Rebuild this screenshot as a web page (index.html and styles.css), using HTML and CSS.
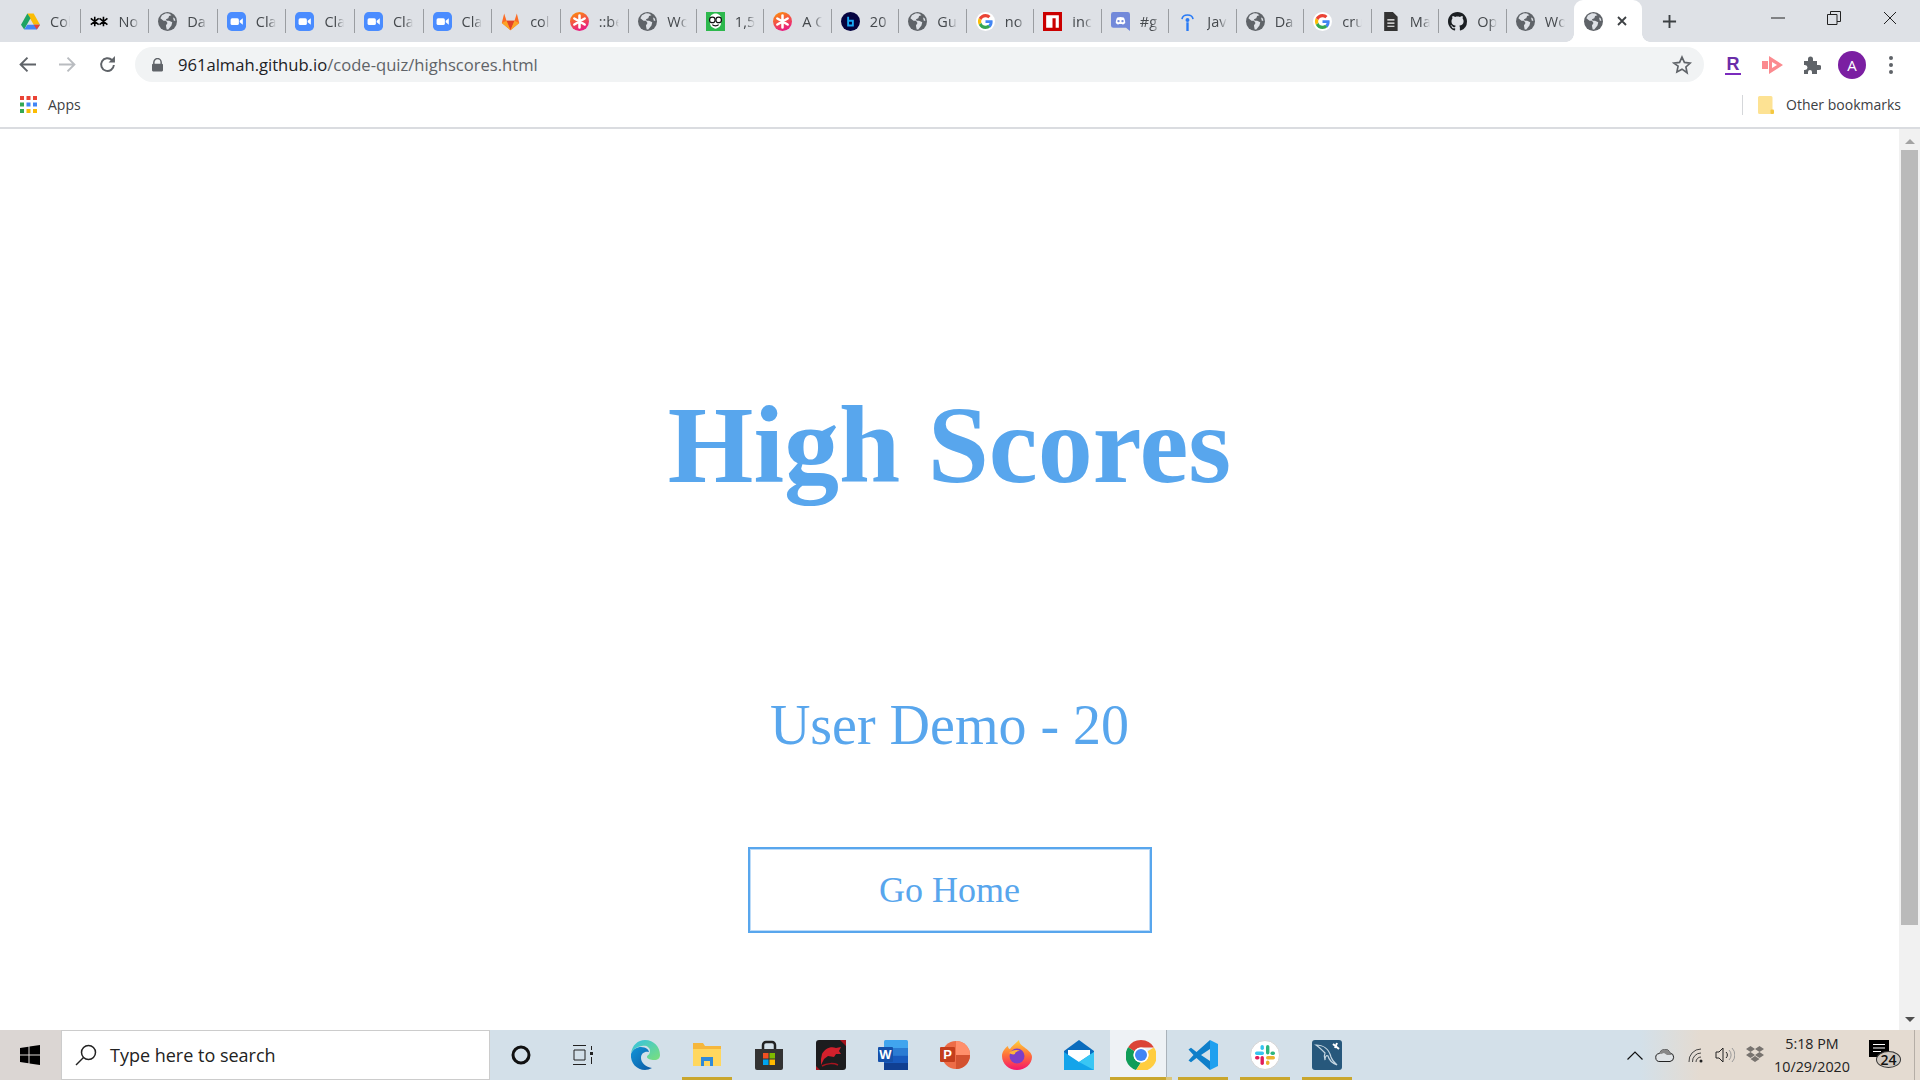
FILE: index.html
```html
<!DOCTYPE html>
<html lang="en">
<head>
  <meta charset="UTF-8">
  <title>High Scores</title>
  <link rel="stylesheet" href="styles.css">
</head>
<body>
  <!-- shared favicons -->
  <svg class="defs" width="0" height="0">
    <defs>
      <linearGradient id="ast" x1="0" y1="0" x2="0.4" y2="1">
        <stop offset="0" stop-color="#ff9500"/>
        <stop offset="1" stop-color="#e9207f"/>
      </linearGradient>
      <symbol id="globe" viewBox="0 0 24 24">
        <circle cx="12" cy="12" r="12" fill="#5f6368"/>
        <path d="M10 1.5 5 4 3 8l4 3 3 0 2 3-2 3 1 5 2 0 4-5 1-4-4-2-3 0-1-2 3-1 1-3 3-1-3-2z M19 7l2 1 1 3-2 0z" fill="#dee1e6"/>
      </symbol>
      <symbol id="zoom" viewBox="0 0 24 24">
        <rect width="24" height="24" rx="6" fill="#4a8cff"/>
        <rect x="4.5" y="8" width="10.5" height="8.5" rx="2" fill="#fff"/>
        <path d="M16 11l4-3v8l-4-3z" fill="#fff"/>
      </symbol>
      <symbol id="google" viewBox="0 0 24 24">
        <circle cx="12" cy="12" r="12" fill="#fff"/>
        <path d="M21 12.300c0-.8-.1-1.400-.2-2H12v3.700h5.100c-.2 1.200-1 2.300-2.100 3l3.200 2.500c1.800-1.700 2.800-4.200 2.800-7.200z" fill="#4285f4"/>
        <path d="M12 21.500c2.600 0 4.700-.9 6.200-2.500L15 16.500c-.8.600-1.800.9-3 .9-2.400 0-4.500-1.600-5.200-3.900l-3.300 2.500c1.600 3.200 4.800 5.500 8.500 5.500z" fill="#34a853"/>
        <path d="M6.800 13.500c-.4-1.100-.4-2.400 0-3.500L3.500 7.500c-1.400 2.800-1.400 5.700 0 8.500z" fill="#fbbc05"/>
        <path d="M12 6.500c1.400 0 2.600.5 3.600 1.400l2.700-2.700C16.700 3.500 14.500 2.500 12 2.500c-3.700 0-6.900 2.200-8.500 5L6.800 10c.7-2 2.800-3.500 5.200-3.500z" fill="#ea4335"/>
      </symbol>
      <symbol id="asterisk" viewBox="0 0 24 24">
        <circle cx="12" cy="12" r="12" fill="url(#ast)"/>
        <path d="M12 4.500v15M5.500 8.200l13 7.600M18.500 8.200l-13 7.600" stroke="#fff" stroke-width="3.200" stroke-linecap="round"/>
      </symbol>
    </defs>
  </svg>

  <div class="tabstrip">
    <div class="tab">
      <svg class="fav" viewBox="0 0 24 24">
        <path d="M8 2h8l8 14h-8z" fill="#fbbc04"/>
        <path d="M8 2 0 16l4 6 8-14z" fill="#1ea362"/>
        <path d="M4 22h16l4-6H8z" fill="#4285f4"/>
        <path d="M20 22l4-6h-8z" fill="#ea4335"/>
      </svg>
      <span class="tab-title">Col</span>
    </div>
    <div class="tab">
      <svg class="fav" viewBox="0 0 24 24">
        <path d="M6 6v12M1 8l10 8M11 8 1 16M17 6v12M12 8l10 8M22 8 12 16" stroke="#000" stroke-width="2"/>
      </svg>
      <span class="tab-title">No</span>
    </div>
    <div class="tab"><svg class="fav"><use href="#globe"/></svg><span class="tab-title">Da</span></div>
    <div class="tab"><svg class="fav"><use href="#zoom"/></svg><span class="tab-title">Cla</span></div>
    <div class="tab"><svg class="fav"><use href="#zoom"/></svg><span class="tab-title">Cla</span></div>
    <div class="tab"><svg class="fav"><use href="#zoom"/></svg><span class="tab-title">Cla</span></div>
    <div class="tab"><svg class="fav"><use href="#zoom"/></svg><span class="tab-title">Cla</span></div>
    <div class="tab">
      <svg class="fav" viewBox="0 0 24 24">
        <path d="M12 23 1 14l3-12 3 9h10l3-9 3 12z" fill="#fc6d26"/>
        <path d="M12 23 7 11h10z" fill="#e24329"/>
        <path d="M1 14l6-3 5 12zM23 14l-6-3-5 12z" fill="#fca326"/>
      </svg>
      <span class="tab-title">col</span>
    </div>
    <div class="tab"><svg class="fav"><use href="#asterisk"/></svg><span class="tab-title">::be</span></div>
    <div class="tab"><svg class="fav"><use href="#globe"/></svg><span class="tab-title">Wo</span></div>
    <div class="tab">
      <svg class="fav" viewBox="0 0 24 24">
        <rect width="24" height="24" fill="#2db84d"/>
        <path d="M5 8c0-4 4-6 7-6s7 2 7 6v6c0 4-4 7-7 7s-7-3-7-7z" fill="#fff"/>
        <circle cx="8" cy="10" r="3.500" fill="#fff" stroke="#111" stroke-width="1.500"/>
        <circle cx="16" cy="10" r="3.500" fill="#fff" stroke="#111" stroke-width="1.500"/>
        <path d="M8 16c2 2 6 2 8 0" fill="none" stroke="#111" stroke-width="1.500"/>
      </svg>
      <span class="tab-title">1,5</span>
    </div>
    <div class="tab"><svg class="fav"><use href="#asterisk"/></svg><span class="tab-title">A C</span></div>
    <div class="tab">
      <svg class="fav" viewBox="0 0 24 24">
        <circle cx="12" cy="12" r="12" fill="#050340"/>
        <path d="M9 6v11h6v-6H9" fill="none" stroke="#19a8f5" stroke-width="2.400"/>
      </svg>
      <span class="tab-title">20</span>
    </div>
    <div class="tab"><svg class="fav"><use href="#globe"/></svg><span class="tab-title">Gu</span></div>
    <div class="tab"><svg class="fav"><use href="#google"/></svg><span class="tab-title">no</span></div>
    <div class="tab">
      <svg class="fav" viewBox="0 0 24 24">
        <rect width="24" height="24" fill="#cb0000"/>
        <path d="M4 4h16v16h-4V8h-4v12H4z" fill="#fff"/>
      </svg>
      <span class="tab-title">inc</span>
    </div>
    <div class="tab">
      <svg class="fav" viewBox="0 0 24 24">
        <path d="M3 0h18a3 3 0 0 1 3 3v21l-5-4H3a3 3 0 0 1-3-3V3a3 3 0 0 1 3-3z" fill="#7289da"/>
        <path d="M6 14c0-3 1-6 2-7 3-1 5-1 8 0 1 1 2 4 2 7-2 2-3 2-4 1h-4c-1 1-2 1-4-1z" fill="#fff"/>
        <circle cx="9.500" cy="11.500" r="1.500" fill="#7289da"/>
        <circle cx="14.500" cy="11.500" r="1.500" fill="#7289da"/>
      </svg>
      <span class="tab-title">#g</span>
    </div>
    <div class="tab">
      <svg class="fav" viewBox="0 0 24 24">
        <path d="M5 9c1-7 13-7 14 0" fill="none" stroke="#2a7bf5" stroke-width="2"/>
        <circle cx="12" cy="10" r="2.500" fill="#2a7bf5"/>
        <rect x="10.500" y="13" width="3" height="11" fill="#2a7bf5"/>
      </svg>
      <span class="tab-title">Jav</span>
    </div>
    <div class="tab"><svg class="fav"><use href="#globe"/></svg><span class="tab-title">Da</span></div>
    <div class="tab"><svg class="fav"><use href="#google"/></svg><span class="tab-title">cru</span></div>
    <div class="tab">
      <svg class="fav" viewBox="0 0 24 24">
        <path d="M4 0h11l6 6v18H4z" fill="#333"/>
        <path d="M8 10h9M8 14h9M8 18h9" stroke="#fff" stroke-width="1.500"/>
      </svg>
      <span class="tab-title">Ma</span>
    </div>
    <div class="tab">
      <svg class="fav" viewBox="0 0 16 16">
        <path fill="#1b1f23" d="M8 0C3.580 0 0 3.580 0 8c0 3.540 2.290 6.530 5.470 7.590.4.070.55-.17.550-.38 0-.19-.01-.82-.01-1.490-2.010.37-2.530-.49-2.690-.94-.09-.23-.48-.94-.82-1.130-.28-.15-.68-.52-.01-.53.630-.01 1.080.58 1.230.82.720 1.210 1.870.87 2.330.66.070-.52.28-.87.510-1.070-1.780-.2-3.640-.89-3.640-3.950 0-.87.310-1.590.820-2.150-.08-.2-.36-1.020.08-2.120 0 0 .67-.21 2.200.82.640-.18 1.320-.27 2-.27s1.360.09 2 .27c1.530-1.040 2.200-.82 2.200-.82.440 1.100.16 1.920.08 2.120.51.560.82 1.270.82 2.150 0 3.070-1.870 3.750-3.650 3.950.29.250.54.730.54 1.480 0 1.070-.01 1.930-.01 2.200 0 .21.150.46.550.38A8.010 8.010 0 0 0 16 8c0-4.420-3.580-8-8-8z"/>
      </svg>
      <span class="tab-title">Op</span>
    </div>
    <div class="tab tab-last"><svg class="fav"><use href="#globe"/></svg><span class="tab-title">Wo</span></div>
    <div class="tab tab-active">
      <svg class="fav"><use href="#globe"/></svg>
      <svg class="tab-close" viewBox="0 0 10 10"><path d="M1 1l8 8M9 1 1 9" stroke="#3c4043" stroke-width="1.800"/></svg>
    </div>
    <svg class="new-tab" viewBox="0 0 16 16"><path d="M8 1v14M1 8h14" stroke="#3c4043" stroke-width="2"/></svg>
    <div class="window-controls">
      <svg viewBox="0 0 14 14"><path d="M0 7h14" stroke="#222" stroke-width="1"/></svg>
      <svg viewBox="0 0 14 14"><path d="M.5 3.500h9.500v10H.5zM3.500 3.500v-3h10v10H10" fill="none" stroke="#222" stroke-width="1"/></svg>
      <svg viewBox="0 0 14 14"><path d="M1 1l12 12M13 1 1 13" stroke="#222" stroke-width="1"/></svg>
    </div>
  </div>

  <div class="toolbar">
    <svg class="nav-icon back" viewBox="0 0 16 16"><path d="M16 8H2M8 1.500 1.500 8 8 14.500" fill="none" stroke="#5f6368" stroke-width="1.800"/></svg>
    <svg class="nav-icon forward" viewBox="0 0 16 16"><path d="M0 8h14M8 1.500 14.500 8 8 14.500" fill="none" stroke="#b9bcc0" stroke-width="1.800"/></svg>
    <svg class="nav-icon reload" viewBox="0 0 16 16"><path d="M14 8.500A6 6 0 1 1 12.200 3.800" fill="none" stroke="#5f6368" stroke-width="1.800"/><path d="M15 0v6H9z" fill="#5f6368"/></svg>
    <div class="omnibox">
      <svg class="lock" viewBox="0 0 12 14"><path d="M2 6V4a4 4 0 0 1 8 0v2" fill="none" stroke="#5f6368" stroke-width="1.600"/><rect y="5.500" width="12" height="8.500" rx="1.200" fill="#5f6368"/></svg>
      <span class="url"><b>961almah.github.io</b>/code-quiz/highscores.html</span>
      <svg class="star" viewBox="0 0 24 24"><path d="M12 2.500l2.900 6.400 7 .8-5.200 4.700 1.400 6.900L12 17l-6.100 3.300 1.400-6.900L2.100 9.700l7-.8z" fill="none" stroke="#5f6368" stroke-width="2"/></svg>
    </div>
    <span class="ext-r">R</span>
    <svg class="ext-arrow" viewBox="0 0 21 18"><path d="M0 5h6v8H0zM7 0l14 9-14 9z" fill="#fb8a8f"/><path d="M10 6l5 3-5 3z" fill="#fff"/></svg>
    <svg class="ext-puzzle" viewBox="0 0 18 18"><path d="M1 5h4V3a2.500 2.500 0 0 1 5 0v2h4v4h2a2.500 2.500 0 0 1 0 5h-2v4H9v-2a2 2 0 0 0-4 0v2H1v-4h1a2.500 2.500 0 0 0 0-5H1z" fill="#5f6368"/></svg>
    <div class="avatar">A</div>
    <div class="kebab"><i></i><i></i><i></i></div>
  </div>

  <div class="bookmarks">
    <svg class="apps" viewBox="0 0 17 17">
      <rect width="4" height="4" fill="#ea4335"/><rect x="6.500" width="4" height="4" fill="#ea4335"/><rect x="13" width="4" height="4" fill="#ea4335"/>
      <rect y="6.500" width="4" height="4" fill="#34a853"/><rect x="6.500" y="6.500" width="4" height="4" fill="#4285f4"/><rect x="13" y="6.500" width="4" height="4" fill="#4285f4"/>
      <rect y="13" width="4" height="4" fill="#34a853"/><rect x="6.500" y="13" width="4" height="4" fill="#fbbc04"/><rect x="13" y="13" width="4" height="4" fill="#fbbc04"/>
    </svg>
    <span class="bm-label">Apps</span>
    <div class="bm-sep"></div>
    <svg class="bm-folder" viewBox="0 0 16 18"><path d="M1.500 0h11.500a1.500 1.500 0 0 1 1.500 1.500V18H1.500A1.500 1.500 0 0 1 0 16.500v-15A1.500 1.500 0 0 1 1.500 0z" fill="#fde293"/><rect x="12.500" y="13.500" width="3.500" height="4.500" rx="1" fill="#f4c842"/></svg>
    <span class="bm-label">Other bookmarks</span>
  </div>

  <div class="viewport">
    <main class="page">
      <h1 class="title">High Scores</h1>
      <p class="score">User Demo - 20</p>
      <a class="home-btn" href="#">Go Home</a>
    </main>
    <div class="scrollbar">
      <svg class="sb-arrow sb-up" viewBox="0 0 10 5"><path d="M5 0l5 5H0z" fill="#a3a3a3"/></svg>
      <div class="sb-thumb"></div>
      <svg class="sb-arrow sb-down" viewBox="0 0 10 5"><path d="M0 0h10L5 5z" fill="#505050"/></svg>
    </div>
  </div>

  <div class="taskbar">
    <div class="start">
      <svg class="win-logo" viewBox="0 0 20 20"><path d="M0 3l8.500-1.200v7.700H0zM9.500 1.600 20 0v9.500H9.500zM0 10.500h8.500v7.700L0 17zM9.500 10.500H20V20L9.500 18.400z" fill="#000"/></svg>
    </div>
    <div class="search">
      <svg class="search-icon" viewBox="0 0 22 22"><circle cx="13.500" cy="8.500" r="7" fill="none" stroke="#222" stroke-width="1.500"/><path d="M8.500 13.500 1 21" stroke="#222" stroke-width="1.500"/></svg>
      <span>Type here to search</span>
    </div>

    <div class="tb-item">
      <svg class="tb-small" viewBox="0 0 20 20"><circle cx="10" cy="10" r="8" fill="none" stroke="#111" stroke-width="3"/></svg>
    </div>
    <div class="tb-item">
      <svg class="tb-small" viewBox="0 0 20 20"><path d="M0 .5h13M0 19.500h13M1 5h11v10H1z" fill="none" stroke="#222" stroke-width="1"/><rect x="17" y="7" width="3" height="3" fill="#222"/><path d="M18.500 1v4M18.500 12v7" stroke="#222"/></svg>
    </div>
    <div class="tb-item">
      <svg class="tb-icon" viewBox="0 0 30 30">
        <defs>
          <linearGradient id="edge1" x1="0" y1="0" x2="1" y2="1"><stop offset="0" stop-color="#34c1e4"/><stop offset="1" stop-color="#7be07a"/></linearGradient>
          <linearGradient id="edge2" x1="0" y1="0" x2="1" y2="1"><stop offset="0" stop-color="#1295d8"/><stop offset="1" stop-color="#0c59a4"/></linearGradient>
        </defs>
        <path d="M1 14C2 5 8 0 15 0c9 0 15 7 15 15 0 3-2 5-6 5-3 0-7-1-7-3 0-2 3-2 3-6C20 7 16 5 12 6 6 7 2 10 1 14z" fill="url(#edge1)"/>
        <path d="M1 14c2-5 6-7 10-7 5 0 8 3 8 5-4-1-8 1-8 6 0 5 5 9 11 10-2 1-5 2-7 2C7 30 0 23 1 14z" fill="url(#edge2)"/>
      </svg>
    </div>
    <div class="tb-item tb-running">
      <svg class="tb-icon" viewBox="0 0 30 30">
        <path d="M1 3h10l2 3h16v18H1z" fill="#f6b73c"/>
        <path d="M1 9h28v17H1z" fill="#ffd75e"/>
        <path d="M9 17h12v9h-3v-5h-6v5H9z" fill="#2f8ad8"/>
      </svg>
    </div>
    <div class="tb-item">
      <svg class="tb-icon" viewBox="0 0 30 30">
        <path d="M9 9V5a3 3 0 0 1 3-3h6a3 3 0 0 1 3 3v4" fill="none" stroke="#222" stroke-width="2.500"/>
        <path d="M1 9h28v19a2 2 0 0 1-2 2H3a2 2 0 0 1-2-2z" fill="#333"/>
        <rect x="9" y="13" width="5.500" height="5.500" fill="#f25022"/><rect x="15.500" y="13" width="5.500" height="5.500" fill="#7fba00"/>
        <rect x="9" y="19.500" width="5.500" height="5.500" fill="#00a4ef"/><rect x="15.500" y="19.500" width="5.500" height="5.500" fill="#ffb900"/>
      </svg>
    </div>
    <div class="tb-item">
      <svg class="tb-icon" viewBox="0 0 30 30">
        <rect width="30" height="30" rx="3" fill="#1c1c1e"/>
        <path d="M6 14c3-5 8-8 14-6l5-1-2 4 2 3-5 0-2 3-6-1-4 3-3 6 0-6z" fill="#d2202c"/>
        <path d="M6 26c5-3 12-3 16-1" fill="none" stroke="#a5141e" stroke-width="1.500"/>
        <path d="M24 0h6v6zM0 26l4 4H0z" fill="#a5141e"/>
      </svg>
    </div>
    <div class="tb-item">
      <svg class="tb-icon" viewBox="0 0 30 30">
        <rect x="6" width="24" height="30" rx="1.500" fill="#41a5ee"/>
        <rect x="6" y="8" width="24" height="7.500" fill="#2b7cd3"/>
        <rect x="6" y="15.500" width="24" height="7.500" fill="#185abd"/>
        <rect x="6" y="23" width="24" height="7" fill="#103f91"/>
        <rect y="7" width="15" height="15" rx="1" fill="#1551aa"/>
        <text class="icon-letter" x="7.500" y="19" text-anchor="middle">W</text>
      </svg>
    </div>
    <div class="tb-item">
      <svg class="tb-icon" viewBox="0 0 30 30">
        <circle cx="16" cy="15" r="14" fill="#ed6c47"/>
        <path d="M16 1a14 14 0 0 1 14 14H16z" fill="#ff8f6b"/>
        <path d="M16 15h14a14 14 0 0 1-14 14z" fill="#d35230"/>
        <rect y="7" width="15" height="15" rx="1" fill="#c43e1c"/>
        <text class="icon-letter" x="7.500" y="19" text-anchor="middle">P</text>
      </svg>
    </div>
    <div class="tb-item">
      <svg class="tb-icon" viewBox="0 0 30 30">
        <defs>
          <linearGradient id="fx" x1="0" y1="0" x2="0" y2="1"><stop offset="0" stop-color="#ffd43a"/><stop offset=".5" stop-color="#ff7139"/><stop offset="1" stop-color="#f5156c"/></linearGradient>
        </defs>
        <path d="M6 6c0 2 1 3 2 3 2-3 5-5 9-9 0 3 2 5 5 7 4 3 8 6 8 10 0 7-7 13-15 13S0 24 0 16c0-4 3-8 6-10z" fill="url(#fx)"/>
        <circle cx="15" cy="16" r="7.500" fill="#7c3fc8"/>
        <path d="M7 13c3-3 8-4 11-2-3 0-5 1-5 3-2 1-4 0-6-1z" fill="#ffb33a"/>
      </svg>
    </div>
    <div class="tb-item">
      <svg class="tb-icon" viewBox="0 0 30 30">
        <path d="M0 11 15 0l15 11v19H0z" fill="#0a6cbd"/>
        <path d="M4 10h22v9l-11 6-11-6z" fill="#fff"/>
        <path d="M0 12l15 10 15-10v18H0z" fill="#14a4ea"/>
        <path d="M15 22l15-10v18z" fill="#39c6f4"/>
      </svg>
    </div>
    <div class="tb-item tb-running tb-active">
      <svg class="tb-icon" viewBox="0 0 30 30">
        <path d="M15 0a15 15 0 0 1 13 7.500H15a7.500 7.500 0 0 0-6.500 3.750L2.100 7.300A15 15 0 0 1 15 0z" fill="#db4437"/>
        <path d="M2.100 7.300l6.400 4A7.500 7.500 0 0 0 15 22.500L10 30A15 15 0 0 1 2.100 7.300z" fill="#0f9d58"/>
        <path d="M28 7.500A15 15 0 0 1 10 30l5-7.500A7.500 7.500 0 0 0 21.500 11.200z" fill="#ffcd40"/>
        <circle cx="15" cy="15" r="7.500" fill="#fff"/>
        <circle cx="15" cy="15" r="6" fill="#4285f4"/>
      </svg>
    </div>
    <div class="tb-item tb-running">
      <svg class="tb-icon" viewBox="0 0 30 30">
        <path d="M22 0 8.500 12 3 7.800.5 9.500 5.500 15 .5 20.500 3 22.200 8.500 18 22 30v-9l-9-6 9-6z" fill="#0e7fca"/>
        <path d="M22 0l8 4v22l-8 4z" fill="#20a0ef"/>
      </svg>
    </div>
    <div class="tb-item tb-running">
      <svg class="tb-icon" viewBox="0 0 30 30">
        <circle cx="15" cy="15" r="14.500" fill="#fff" stroke="#d5d5d5"/>
        <rect x="5" y="11.500" width="9" height="3.400" rx="1.700" fill="#36c5f0"/><rect x="10.500" y="5" width="3.400" height="5" rx="1.700" fill="#36c5f0"/>
        <rect x="16" y="5" width="3.400" height="9.500" rx="1.700" fill="#2eb67d"/><rect x="20.500" y="11.500" width="4.500" height="3.400" rx="1.700" fill="#2eb67d"/>
        <rect x="16" y="16" width="9" height="3.400" rx="1.700" fill="#ecb22e"/><rect x="16" y="20.500" width="3.400" height="4.500" rx="1.700" fill="#ecb22e"/>
        <rect x="10.500" y="16" width="3.400" height="9" rx="1.700" fill="#e01e5a"/><rect x="5" y="16" width="4.500" height="3.400" rx="1.700" fill="#e01e5a"/>
      </svg>
    </div>
    <div class="tb-item tb-running">
      <svg class="tb-icon" viewBox="0 0 30 30">
        <rect width="30" height="30" rx="3" fill="#27587c"/>
        <path d="M4 5c7 0 13 4 15 12 1 3 3 5 6 8-5-2-8-5-9-9-2-1-3 1-3 4-1-3-1-5 0-7C10 10 7 7 4 5z" fill="none" stroke="#c5d6e2" stroke-width="1.200"/>
        <path d="M21 4l6 5M25 3l-2 5" stroke="#fff" stroke-width="2"/>
      </svg>
    </div>

    <div class="tray">
      <svg class="tray-chevron" viewBox="0 0 16 9"><path d="M.5 8.500 8 1l7.500 7.500" fill="none" stroke="#111" stroke-width="1.200"/></svg>
      <svg class="tray-cloud" viewBox="0 0 20 13"><path d="M5 12.500a4 4 0 0 1-.5-8A5.500 5.500 0 0 1 15 4a4.300 4.300 0 0 1 0 8.500z" fill="#dfe3e6" stroke="#222"/><path d="M4.500 4.500A5.500 5.500 0 0 1 15 4l2 2-5 0-3-2-3 1z" fill="#888"/></svg>
      <svg class="tray-wifi" viewBox="0 0 16 16"><circle cx="13" cy="14" r="1.500" fill="#222"/><path d="M1 15A12 12 0 0 1 13 2M4.500 15A8.500 8.500 0 0 1 13 6M8 15a5 5 0 0 1 5-5" fill="none" stroke="#333" stroke-width=".9"/></svg>
      <svg class="tray-sound" viewBox="0 0 20 16"><path d="M1 5h3l4-4v14l-4-4H1z" fill="none" stroke="#222"/><path d="M11 5a4 4 0 0 1 0 6" fill="none" stroke="#222"/><path d="M14 3a7 7 0 0 1 0 10M17 1a10 10 0 0 1 0 14" fill="none" stroke="#999"/></svg>
      <svg class="tray-dropbox" viewBox="0 0 18 16"><path d="M4.500 0 9 3 4.500 6 0 3zM13.500 0 18 3l-4.500 3L9 3zM4.500 6 9 9l-4.500 3L0 9zM13.500 6 18 9l-4.500 3L9 9zM4.500 13 9 10l4.500 3L9 16z" fill="#77736f"/></svg>
      <div class="clock">
        <span>5:18 PM</span>
        <span>10/29/2020</span>
      </div>
      <div class="notify">
        <svg class="notify-icon" viewBox="0 0 20 18"><path d="M0 0h20v17H0z" fill="#000"/><path d="M4 4.500h12M4 8h12M4 11.500h8" stroke="#fff" stroke-width="1.200"/></svg>
        <span class="notify-badge">24</span>
      </div>
      <div class="show-desktop"></div>
    </div>
  </div>
</body>
</html>
```

FILE: styles.css
```css
* {
  box-sizing: border-box;
}

html,
body {
  height: 100%;
}

body {
  margin: 0;
  display: flex;
  flex-direction: column;
  height: 1080px;
  overflow: hidden;
  background: #fff;
  font-family: "Open Sans", "Noto Sans", sans-serif;
}

.defs {
  position: absolute;
}

/* tab strip */
.tabstrip {
  display: flex;
  align-items: center;
  flex: 0 0 42px;
  padding-left: 12px;
  background: #dee1e6;
}

.tab {
  display: flex;
  align-items: center;
  flex: 0 0 67.5px;
  height: 42px;
  padding-left: 9px;
}

/* the first nine tabs came out a touch wider */
.tab:nth-child(-n+9) {
  flex-basis: 68.6px;
}

.tab::after {
  content: "";
  width: 1px;
  height: 24px;
  margin-left: auto;
  background: #9a9da1;
}

.tab-last::after {
  display: none;
}

.fav {
  flex: 0 0 19px;
  width: 19px;
  height: 19px;
}

.tab-title {
  width: 26px;
  margin-left: 10px;
  white-space: nowrap;
  font-size: 14.5px;
  color: #45494d;
  -webkit-mask-image: linear-gradient(90deg, #000 12px, transparent 20px);
  mask-image: linear-gradient(90deg, #000 12px, transparent 20px);
}

.tab-active {
  position: relative;
  flex-basis: 67.5px;
  padding-left: 10px;
  background: #fff;
  border-radius: 9px 9px 0 0;
}

.tab-active::after {
  display: none;
}

.tab-active::before {
  content: "";
  position: absolute;
  left: -8px;
  right: -8px;
  bottom: 0;
  height: 8px;
  background:
    radial-gradient(circle at 0 0, #dee1e6 7.500px, #fff 8px) left / 8px 8px no-repeat,
    radial-gradient(circle at 100% 0, #dee1e6 7.500px, #fff 8px) right / 8px 8px no-repeat;
}

.tab-close {
  width: 10px;
  height: 10px;
  margin-left: 14px;
}

.new-tab {
  width: 15px;
  height: 15px;
  margin-left: 20px;
}

.window-controls {
  display: flex;
  gap: 42px;
  margin-left: auto;
  margin-right: 23px;
}

.window-controls svg {
  width: 14px;
  height: 14px;
  margin-top: -6px;
}

/* toolbar */
.toolbar {
  display: flex;
  align-items: center;
  flex: 0 0 44px;
  padding: 1px 0 0 19px;
  background: #fff;
}

.nav-icon {
  width: 17px;
  height: 17px;
}

.forward {
  margin-left: 23px;
}

.reload {
  margin-left: 23px;
}

.omnibox {
  display: flex;
  align-items: center;
  width: 1569px;
  height: 35px;
  margin-left: 19px;
  padding: 0 12px 0 17px;
  border-radius: 18px;
  background: #f1f3f4;
}

.lock {
  width: 11px;
  height: 14px;
}

.url {
  margin-left: 15px;
  font-size: 16.6px;
  color: #5f6368;
  white-space: nowrap;
}

.url b {
  font-weight: 400;
  color: #202124;
}

.star {
  width: 20px;
  height: 20px;
  margin-left: auto;
}

.ext-r {
  width: 16px;
  margin-left: 21px;
  border-bottom: 2px solid #7b2bbd;
  font-family: "Liberation Sans", sans-serif;
  font-size: 18px;
  font-weight: 700;
  line-height: 18px;
  text-align: center;
  color: #6a2da8;
}

.ext-arrow {
  width: 21px;
  height: 18px;
  margin-left: 21px;
}

.ext-puzzle {
  width: 18px;
  height: 18px;
  margin-left: 20px;
}

.avatar {
  width: 28px;
  height: 28px;
  margin-left: 17px;
  border-radius: 50%;
  background: #7b1fa2;
  color: #fff;
  font-size: 15px;
  line-height: 28px;
  text-align: center;
}

.kebab {
  display: flex;
  flex-direction: column;
  gap: 3px;
  margin-left: 23px;
}

.kebab i {
  width: 4px;
  height: 4px;
  border-radius: 50%;
  background: #5f6368;
}

/* bookmarks */
.bookmarks {
  display: flex;
  align-items: center;
  flex: 0 0 43px;
  padding: 0 19px 4px 20px;
  border-bottom: 2px solid #dadce0;
  background: #fff;
}

.apps {
  width: 17px;
  height: 17px;
  margin-right: 11px;
}

.bm-label {
  font-size: 14px;
  color: #3c4043;
  white-space: nowrap;
}

.bm-sep {
  width: 1px;
  height: 20px;
  margin-left: auto;
  background: #d5d7da;
}

.bm-folder {
  width: 16px;
  height: 18px;
  margin: 0 12px 0 15px;
}

/* page */
.viewport {
  display: flex;
  flex: 1;
  min-height: 0;
}

.page {
  display: flex;
  flex: 1;
  flex-direction: column;
  align-items: center;
  font-family: "Liberation Serif", serif;
  color: #58a6ed;
}

.title {
  margin: 256px 0 0;
  font-size: 110px;
  font-weight: 700;
  line-height: 120px;
}

.score {
  margin: 188px 0 0;
  font-size: 56px;
  line-height: 64px;
}

.home-btn {
  display: flex;
  align-items: center;
  justify-content: center;
  width: 404px;
  height: 86px;
  margin-top: 90px;
  border: 2px solid #58a6ed;
  box-shadow: inset 0 0 0 1px rgba(88, 166, 237, .4);
  font-size: 36px;
  color: inherit;
  text-decoration: none;
}

.scrollbar {
  display: flex;
  flex: 0 0 21px;
  flex-direction: column;
  align-items: center;
  background: #f1f1f1;
}

.sb-arrow {
  width: 10px;
  height: 5px;
}

.sb-up {
  margin-top: 10px;
}

.sb-thumb {
  width: 17px;
  height: 775px;
  margin-top: 6px;
  background: #bababa;
}

.sb-down {
  margin-top: 92px;
}

/* taskbar */
.taskbar {
  display: flex;
  align-items: stretch;
  flex: 0 0 50px;
  background: linear-gradient(90deg, #d3e0e9 0, #d3e0e9 1640px, #e4dbd1 1700px, #e4dbd1 100%);
}

.start {
  display: flex;
  align-items: center;
  flex: 0 0 61px;
  padding-left: 20px;
  background: #dbd6d3;
}

.win-logo {
  width: 20px;
  height: 20px;
}

.search {
  display: flex;
  align-items: center;
  flex: 0 0 429px;
  padding-left: 13px;
  border: 1px solid #ccc;
  background: #fff;
  font-size: 18px;
  color: #222;
}

.search-icon {
  width: 22px;
  height: 22px;
  margin-right: 13px;
}

.tb-item {
  display: flex;
  align-items: center;
  justify-content: center;
  flex: 0 0 62px;
  padding-bottom: 1px;
}

.tb-small {
  width: 20px;
  height: 20px;
}

.tb-icon {
  width: 30px;
  height: 30px;
}

.tb-running {
  background: linear-gradient(#c9a62d, #c9a62d) center bottom / 50px 3px no-repeat;
}

.tb-active {
  background:
    linear-gradient(#c9a62d, #c9a62d) left bottom / 56px 3px no-repeat,
    linear-gradient(#dcc67a, #dcc67a) left bottom / 62px 3px no-repeat,
    linear-gradient(#a9b2b9, #a9b2b9) 56px 0 / 1px 100% no-repeat,
    linear-gradient(#eef2f5, #eef2f5) left top / 56px 100% no-repeat;
}

.icon-letter {
  font-family: "Liberation Sans", sans-serif;
  font-size: 13px;
  font-weight: 700;
  fill: #fff;
}

.tray {
  display: flex;
  align-items: center;
  flex: 1;
  padding-left: 269px;
}

.tray-chevron {
  width: 16px;
  height: 9px;
}

.tray-cloud {
  width: 20px;
  height: 13px;
  margin-left: 12px;
}

.tray-wifi {
  width: 16px;
  height: 16px;
  margin-left: 13px;
}

.tray-sound {
  width: 20px;
  height: 16px;
  margin-left: 11px;
}

.tray-dropbox {
  width: 18px;
  height: 16px;
  margin: 0 0 2px 11px;
}

.clock {
  display: flex;
  flex-direction: column;
  align-items: center;
  width: 76px;
  margin-left: 10px;
  font-size: 14.3px;
  line-height: 23px;
  color: #222;
}

.notify {
  position: relative;
  width: 32px;
  height: 30px;
  margin-left: 19px;
}

.notify-icon {
  width: 20px;
  height: 18px;
}

.notify-badge {
  position: absolute;
  left: 7px;
  top: 11px;
  width: 25px;
  height: 17px;
  border: 1px solid #333;
  border-radius: 50%;
  background: #cfc8c0;
  font-size: 14px;
  font-weight: 600;
  line-height: 15px;
  text-align: center;
  color: #111;
}

.show-desktop {
  width: 1px;
  height: 100%;
  margin-left: auto;
  margin-right: 5px;
  background: #b5aea6;
}
```
